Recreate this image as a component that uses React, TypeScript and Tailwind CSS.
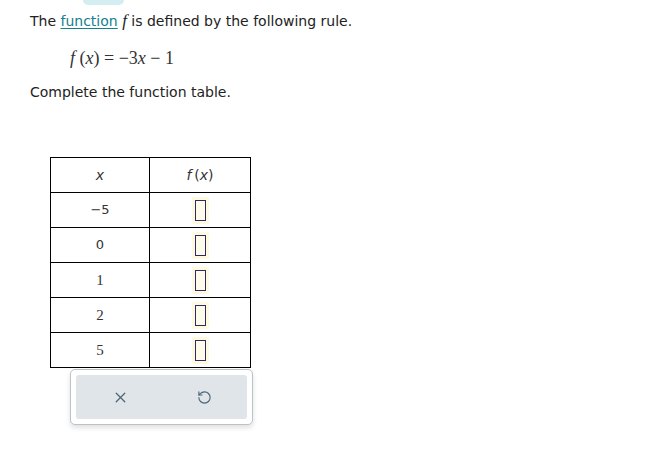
import { X, RotateCcw } from 'lucide-react'

const rows = [
  { x: '−5', serif: false },
  { x: '0', serif: false },
  { x: '1', serif: true },
  { x: '2', serif: true },
  { x: '5', serif: true },
]

function AnswerBox() {
  return (
    <div className="flex items-center justify-center">
      <div className="p-[3px] bg-[#fff9e0] rounded-[2px]">
        <div className="w-[11px] h-[21px] border border-[#2e2a66] bg-[#fffbea]" />
      </div>
    </div>
  )
}

export default function App() {
  const serif = { fontFamily: '"Liberation Serif", "DejaVu Serif", serif' }
  return (
    <div className="w-[649px] h-[450px] bg-white text-[#222] font-['DejaVu_Sans',Verdana,sans-serif]">
      {/* cut-off pill from the toolbar above */}
      <div className="ml-[83px] w-[41px] h-[5px] rounded-b-full bg-[#d3edf1]" />

      <div className="pl-[30px] pt-[6px]">
        <p className="text-[14px] leading-[20px]">
          The <span className="text-[#14808f] underline underline-offset-2">function</span>{' '}
          <i style={serif} className="text-[17px]">f</i> is defined by the following rule.
        </p>

        <p className="pl-[40px] mt-[16px] text-[18px] leading-[22px] text-[#333]" style={serif}>
          <i>f</i>&nbsp;(<i>x</i>)&nbsp;=&nbsp;−3<i>x</i>&nbsp;−&nbsp;1
        </p>

        <p className="mt-[13px] text-[14px] leading-[20px]">Complete the function table.</p>

        <div className="ml-[20px] mt-[55px] w-[201px]">
          <table className="border-collapse border border-black">
            <thead>
              <tr className="h-[35px]">
                <th className="w-[99px] border border-black font-normal text-[14px] italic text-[#333]">x</th>
                <th className="w-[101px] border border-black font-normal text-[14px] text-[#333]">
                  <i>f</i>&thinsp;(<i>x</i>)
                </th>
              </tr>
            </thead>
            <tbody>
              {rows.map((r) => (
                <tr key={r.x} className="h-[35px]">
                  <td
                    className={`border border-black text-center ${r.serif ? 'text-[15px]' : 'text-[13px]'} text-[#333]`}
                    style={r.serif ? serif : undefined}
                  >
                    {r.x}
                  </td>
                  <td className="border border-black">
                    <AnswerBox />
                  </td>
                </tr>
              ))}
            </tbody>
          </table>

          <div className="ml-[20px] mt-[1px] w-[183px] h-[56px] p-[5px] bg-white border border-[#b9c3c8] rounded-[5px] shadow-[0_3px_5px_rgba(0,0,0,0.12)]">
            <div className="h-full flex items-center bg-[#dfe5e8] rounded-[3px]">
              <div className="flex-1 flex justify-center pl-[2px]">
                <X size={17} strokeWidth={1.8} className="text-[#4d6575]" />
              </div>
              <div className="flex-1 flex justify-center">
                <RotateCcw size={15} strokeWidth={1.8} className="text-[#4d6575]" />
              </div>
            </div>
          </div>
        </div>
      </div>
    </div>
  )
}
